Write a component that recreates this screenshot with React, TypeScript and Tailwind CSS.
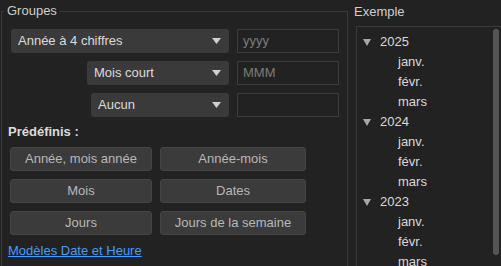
import React from "react";

const font = { fontFamily: '"Liberation Sans", Arial, sans-serif' };

function Arrow() {
  return (
    <svg width="9" height="6" viewBox="0 0 9 6" className="shrink-0">
      <path d="M0 0 H9 L4.5 6 Z" fill="#d0d0d0" />
    </svg>
  );
}

function Combo({ label, w }: { label: string; w: string }) {
  return (
    <div className={`${w} h-[24px] rounded-[3px] bg-[#3a3a3a] flex items-center justify-between pl-[7px] pr-[8px] text-[13px] text-[#dcdcdc]`}>
      <span>{label}</span>
      <Arrow />
    </div>
  );
}

function Input({ ph }: { ph: string }) {
  return (
    <div className="w-[102px] h-[24px] border border-[#3c3c3c] flex items-center px-[5px] text-[13px] text-[#7c7c7c]">
      {ph}
    </div>
  );
}

function Btn({ label, w }: { label: string; w: string }) {
  return (
    <div className={`${w} h-[24px] rounded-[3px] bg-[#3b3b3b] border border-[#454545] flex items-center justify-center text-[13px] text-[#b8b8b8]`}>
      {label}
    </div>
  );
}

function Year({ y }: { y: string }) {
  return (
    <>
      <div className="h-[20px] flex items-center pl-[6px]">
        <svg width="8" height="7" viewBox="0 0 8 7" className="shrink-0">
          <path d="M0 0 H8 L4 7 Z" fill="#a8a8a8" />
        </svg>
        <span className="ml-[9px] text-[13px] text-[#dadada]">{y}</span>
      </div>
      {["janv.", "févr.", "mars"].map((m) => (
        <div key={m} className="h-[20px] flex items-center pl-[41px] text-[13px] text-[#dadada]">
          {m}
        </div>
      ))}
    </>
  );
}

export default function App() {
  return (
    <div className="w-[501px] h-[266px] bg-[#222222] overflow-hidden flex" style={font}>
      <div className="relative w-[347px] h-[262px] ml-[1px] mt-[11px] border-l border-t border-r border-[#3a3a3a] shrink-0">
        <div className="absolute -top-[9px] left-[2px] px-[3px] bg-[#222222] text-[13px] leading-[16px] text-[#cfcfcf]">
          Groupes
        </div>
        <div className="flex flex-col gap-[8px] pt-[17px] pr-[8px]">
          <div className="flex justify-end gap-[8px]">
            <Combo label="Année à 4 chiffres" w="w-[218px]" />
            <Input ph="yyyy" />
          </div>
          <div className="flex justify-end gap-[8px]">
            <Combo label="Mois court" w="w-[142px]" />
            <Input ph="MMM" />
          </div>
          <div className="flex justify-end gap-[8px]">
            <Combo label="Aucun" w="w-[138px]" />
            <Input ph="" />
          </div>
        </div>
        <div className="pl-[6px] mt-[7px] text-[13px] font-bold text-[#dcdcdc] leading-[16px]">Prédéfinis :</div>
        <div className="grid grid-cols-[142px_146px] gap-x-[8px] gap-y-[8px] pl-[8px] mt-[7px]">
          <Btn label="Année, mois année" w="w-[142px]" />
          <Btn label="Année-mois" w="w-[146px]" />
          <Btn label="Mois" w="w-[142px]" />
          <Btn label="Dates" w="w-[146px]" />
          <Btn label="Jours" w="w-[142px]" />
          <Btn label="Jours de la semaine" w="w-[146px]" />
        </div>
        <div className="pl-[6px] mt-[8px] text-[13px] leading-[16px] text-[#429dff] underline">Modèles Date et Heure</div>
      </div>
      <div className="flex flex-col ml-[6px] flex-1 min-w-0">
        <div className="text-[13px] leading-[16px] text-[#cfcfcf] mt-[4px]">Exemple</div>
        <div className="relative ml-[2px] mt-[6px] h-[260px] border-l border-t border-[#3a3a3a] pt-[5px]">
          <Year y="2025" />
          <Year y="2024" />
          <Year y="2023" />
          <div className="absolute right-[2px] top-[2px] w-[6px] h-[226px] rounded-[3px] bg-[#555555]" />
        </div>
      </div>
    </div>
  );
}
